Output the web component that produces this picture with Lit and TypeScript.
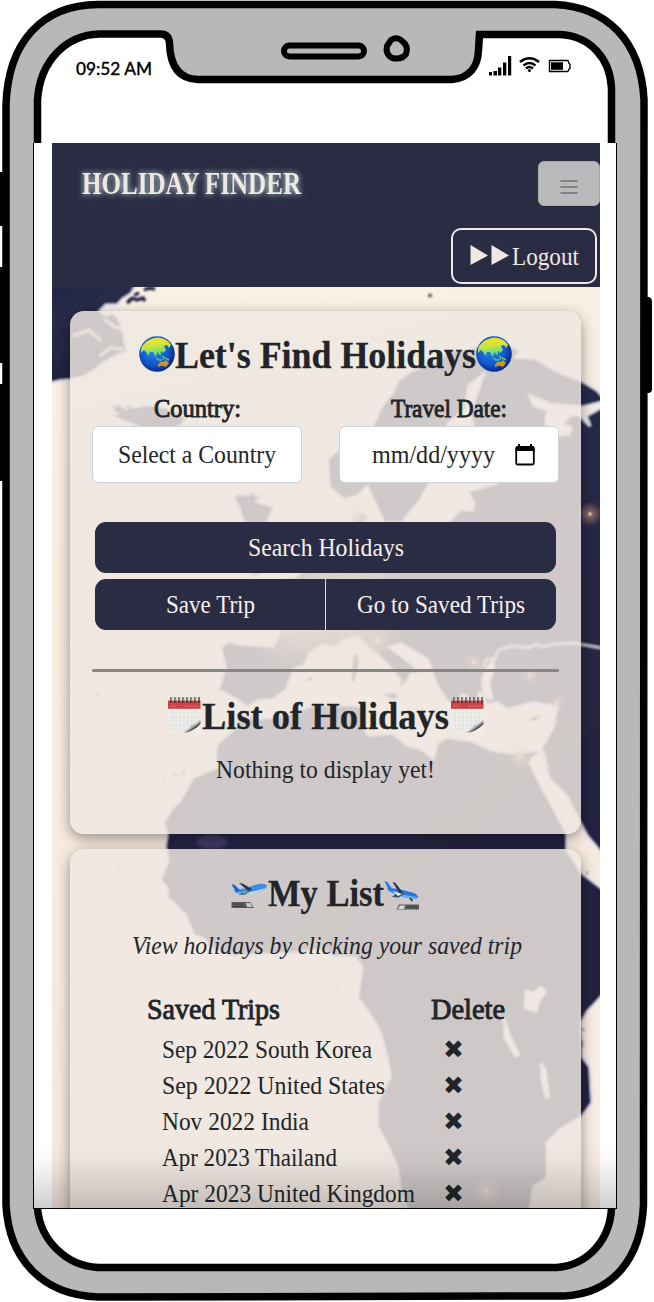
import { LitElement, html, svg, css } from "lit";
import { customElement, property } from "lit/decorators.js";

/** One line of text set to an exact measure; the baseline sits at 76% of the line box. */
@customElement("fit-line")
class FitLine extends LitElement {
  @property() text = "";
  @property({ type: Number }) width = 100;
  @property({ type: Number }) height = 32;
  static styles = css`
    :host { display: block; flex: none; line-height: 0; }
    svg { display: block; overflow: visible; }
    text { fill: currentColor; stroke: currentColor; stroke-width: var(--heft, 0); }
  `;
  render() {
    return html`<svg width=${this.width} height=${this.height} role="img" aria-label=${this.text}>
      <text x="0" y=${this.height * 0.76} textLength=${this.width} lengthAdjust="spacingAndGlyphs">${this.text}</text>
    </svg>`;
  }
}

const line = (text: string, width: number, height = 32) =>
  html`<fit-line .text=${text} .width=${width} .height=${height}></fit-line>`;

const globe = html`<svg class="globe" width="36" height="36" viewBox="0 0 36 36">
  <defs>
    <radialGradient id="sea" cx=".42" cy=".4" r=".62"><stop offset="0" stop-color="#2586ee"/><stop offset=".65" stop-color="#1156cc"/><stop offset="1" stop-color="#08277e"/></radialGradient>
    <linearGradient id="land" x1="0" y1="0" x2=".2" y2="1"><stop offset="0" stop-color="#e3df2c"/><stop offset=".5" stop-color="#c8e341"/><stop offset="1" stop-color="#51d982"/></linearGradient>
  </defs>
  <circle cx="18" cy="18" r="17.8" fill="url(#sea)"/>
  <path d="M3 10Q9 2 19 1.500Q28 2 32 9L30 12L28 9L25 10L27 14L24 17L22 15L21.500 20L18.500 16L16.500 21L14 16L11 16L9.500 20L7 16L5 14L2 17Q1.500 13 3 10Z" fill="url(#land)"/>
  <path d="M7 6Q14 1 24 3L30 7Q23 9 19 6L14 9Z" fill="#eee42c" opacity=".8"/>
  <path d="M17 22L20 24L23 24M23 20L25 22L24 24M26 22L30 24" fill="none" stroke="#5ec66d" stroke-width="1.400"/>
  <path d="M19 29L21 26L25 25.500L27 24L30 27L27 31L23 29.500L19 31Z" fill="#c9962b"/>
</svg>`;

const calendar = html`<svg class="calendar" width="33" height="37" viewBox="0 0 33 37">
  <defs><linearGradient id="curl" x1=".2" y1=".2" x2="1" y2="1"><stop offset="0" stop-color="#fff"/><stop offset=".45" stop-color="#bbb"/><stop offset=".6" stop-color="#444"/><stop offset="1" stop-color="#ddd"/></linearGradient></defs>
  <path d="M0 4H32.500V36.500H1Z" fill="#efeeec"/>
  <path d="M4 13V36M8 13V36M12 13V36M16 13V36M20 13V34M24 13V30M28 13V27M1 17H32M1 21H32M1 25H31M1 29H27M1 33H22" stroke="#dddcda" stroke-width=".7"/>
  <rect y="4.500" width="32.500" height="8.300" fill="#cb4348"/>
  <path d="M2 10H8M17 10H30" stroke="#d96c6e" stroke-width="1.200"/>
  <path d="M3 1V7M7 1V7M11 1V7M15 1V7M19 1V7M23 1V7M27 1V7M31 1V7" stroke="#3b3030" stroke-width="1.300"/>
  <path d="M4 1V5M8 1V5M12 1V5M16 1V5M20 1V5M24 1V5M28 1V5" stroke="#b9b1ae" stroke-width=".9"/>
  <path d="M14 36.500Q21 34 23 29Q29 28 32.500 23V28Q27 34 19 36.500Z" fill="url(#curl)"/>
</svg>`;

const takeOff = html`<svg class="takeoff" width="37" height="30" viewBox="0 0 37 30">
  <path d="M3 8.500Q14 7 24 3Q33 .5 36 3.500Q35 7 29 9Q19 12.500 10 12.500Q5 12 3 8.500Z" fill="#3d8ae8"/>
  <path d="M5 10.500Q17 12 34 6Q29 10 20 11.700Q10 13.500 5 10.500Z" fill="#c7dcee"/>
  <path d="M.5 2.500L3 2.500L9 8L5 10Z" fill="#1e65c9"/>
  <path d="M8 1L11.500 1.500L21 7L18 9.500Z" fill="#26384d"/>
  <path d="M16 8.500L22 8L13 13L7 12.500Z" fill="#356f6b"/>
  <path d="M12 9L18 9.500L12 12Z" fill="#55b8b4"/>
  <path d="M.5 20H19L23 26H.5Z" fill="#5c5d5b"/><path d="M15 21H19L21.500 25H16Z" fill="#c8c9c5"/>
  <path d="M2 22H13M2 24.500H14" stroke="#3d3e3d" stroke-width="1"/>
</svg>`;

const landing = html`<svg class="landing" width="36" height="32" viewBox="0 0 36 32">
  <path d="M3 8Q13 8 26 12Q33 13 34 17Q33 20 27 18.500Q13 16 5 11Z" fill="#2877dc"/>
  <path d="M5 10Q16 15 33 17Q31 20 26 18.500Q13 16 5 10Z" fill="#65aef0"/>
  <path d="M.5 1L3.500 2L9 10L5 11Z" fill="#2c7be8"/>
  <path d="M8.500 2L11.500 3L19 13L16 14Z" fill="#28384a"/>
  <path d="M13 13L20 14L15 17.500L8 17Z" fill="#31536b"/>
  <path d="M9 11L18 14L14 16Z" fill="#e7f0f5"/>
  <path d="M26 18L28.500 21" stroke="#333" stroke-width="1.500"/>
  <path d="M15 24.500H35V29.500H12.500Z" fill="#5a5b58"/><path d="M16 25.500H21L20 29H14Z" fill="#dadbd7"/>
  <path d="M23 27H34" stroke="#3f403e"/>
</svg>`;

const land = svg`
  <path d="M46 280H139L131 294L123 299L117 305L106 305L100 311L107 315L112 312L118 317L122 325L127 352L116 356L104 363L94 371L84 377L70 380L60 381L46 384Z"/>
  <path d="M107 410L113 411L112 405L120 404L126 408L125 402L133 407L148 404L165 407L187 417L182 426L165 432L145 430L130 424L108 415L116 413Z"/>
  <path d="M233 497L239 493L247 495L251 491L258 496L267 490L266 494L257 501L275 507L268 522L279 548L281 565L263 574L247 578L255 567L248 552L252 530L242 520L239 509Z"/>
  <path d="M607 401L583 407L553 405L530 396L534 405L548 410L546 424L555 428L560 435L569 434L571 428L562 424L570 415L578 414L590 426L586 416L607 404V860L587 836L580 823L567 797L550 780L545 768L541 752L532 759L530 763L540 783L553 807L567 833V850L582 873L607 892V993L588 1011L582 1022L583 1057L590 1067L592 1103L582 1117L560 1130L547 1143L553 1160V1172L550 1177L534 1187L530 1214H409L400 1190L397 1167L387 1145L377 1127V1103L390 1077L387 1058L380 1033L373 1020L357 997L362 968L355 958L333 957L322 950L290 954L257 955L233 957L213 950L203 939L193 935L185 915L173 903L167 899V888L160 880L168 860L165 846L167 835L163 823L172 808L180 800L193 777L210 770L217 767L215 753L217 743L235 728L240 713L255 718L275 717L315 704L357 705L365 708L362 722L368 735L393 733L407 745L422 749L433 758L437 743L447 737L470 740L493 750L513 753L540 750L553 727L557 707L533 703L507 710L498 703L487 705L480 693L476 703L463 695L455 708L447 701L436 685L428 660L401 644L390 647L407 660L423 674L412 674L407 682L398 690L400 680L388 665L371 650L357 637L342 641L335 648L323 645L310 654L304 666L294 669L287 690L273 700L258 701L247 708L237 700L218 690L225 667L220 647L229 641L240 644L273 646L280 630L260 595L258 583L294 577L315 560L337 555L350 520L362 525L447 523L461 509L473 510V502L467 491L497 483L443 482L451 460L476 435L469 415L483 375L469 386L465 410L449 423L435 455L429 485L421 500L412 510L403 523L384 523L376 506L367 487L357 497L344 500L329 488L327 460L347 440L372 426L382 405L393 391L398 380L410 371L436 361L449 350L470 348L489 342L510 345L521 351L516 357L535 358L557 371L582 381L597 390Z"/>
  <path d="M352 655L358 650L360 664L355 683H350ZM382 693L398 692L397 702L383 696ZM452 713L469 718L463 721L452 717ZM528 717L545 713L536 722L529 721ZM306 679a4 3 0 1 0 8 0a4 3 0 1 0-8 0M350 514l11-5 9 8-7 8-10-2Z"/>`;

const seas = svg`
  <path d="M525 1008L526 991L534 993L541 987L546 992L540 999L536 1011Z"/>
  <path d="M504 1018L509 1034L519 1055L516 1056L505 1038ZM541 1063L545 1070L549 1097L546 1097L542 1080Z"/>
  <path d="M607 990L588 1011L582 1022L584 1057L591 1067L593 1103L582 1117L560 1130L547 1143V1215H607Z"/>
  <path d="M419 524Q424 501 435 497L428 518ZM482 680l6-14 6-6-1 11-4 12 3 16-8-3Z"/>`;

const worldMap = html`<svg class="map" width="548" height="921" viewBox="52 287 548 921">
  <defs>
    <linearGradient id="paper" x1="0" y1="0" x2=".15" y2="1"><stop offset="0" stop-color="#faf1e5"/><stop offset=".4" stop-color="#f8ebde"/><stop offset="1" stop-color="#f7e8e1"/></linearGradient>
    <linearGradient id="night" x1="0" y1="0" x2=".4" y2="1"><stop offset="0" stop-color="#1b2545"/><stop offset=".35" stop-color="#292b49"/><stop offset="1" stop-color="#22203f"/></linearGradient>
    <radialGradient id="glow"><stop offset="0" stop-color="#ffe5cf"/><stop offset=".22" stop-color="#dca184" stop-opacity=".5"/><stop offset="1" stop-color="#c98570" stop-opacity="0"/></radialGradient>
    <radialGradient id="haze"><stop offset="0" stop-color="#f5d9b6" stop-opacity=".8"/><stop offset="1" stop-color="#e8c4a4" stop-opacity="0"/></radialGradient>
    <filter id="soft" x="-5%" y="-5%" width="110%" height="110%"><feGaussianBlur stdDeviation=".8"/></filter>
  </defs>
  <rect x="52" y="287" width="548" height="921" fill="url(#paper)"/>
  <g filter="url(#soft)">
    <g fill="url(#night)" stroke="#eae6f5" stroke-width="2.400">${land}</g>
    <g fill="#f9ece2" stroke="#eae6f5" stroke-width="1.500">${seas}</g>
    <path d="M483 667L486 660L495 658L499 650L512 646L528 648L537 644L541 647L555 644L573 643L585 645L602 648M543 750L547 768L545 776" fill="none" stroke="#d8d5e8" stroke-width="2"/>
    <path d="M127 303l5-5 5 2 6-2 2 3M134 295l5-2M144 290l5-2 6 1M128 299l3 3" fill="none" stroke="#22223f" stroke-width="3.500"/>
    <path d="M104 319l11 8 12 4M100 356l10-8 13 1M73 336l16-6 12 11" fill="none" stroke="#f0e8ee" stroke-width="2"/>
    <circle cx="430" cy="295.500" r="2" fill="#5d5149"/>
    <path d="M76 689h2M84 687h2M96 694h3M162 738h2M163 778h2M173 775h4M182 775l4-6M100 863h2M117 869h2M111 878h2M586 873h2M583 1028v3M582 1040v8M353 965h2M337 989h2" stroke="#8d8797" stroke-width="2.500"/>
  </g>
  <g fill="url(#haze)"><circle cx="345" cy="610" r="68"/><circle cx="290" cy="620" r="50"/><circle cx="355" cy="515" r="24"/></g>
  <g fill="url(#glow)">
    <circle cx="590" cy="514" r="13"/><circle cx="520" cy="757" r="15"/><circle cx="557" cy="703" r="9"/><circle cx="530" cy="675" r="10"/><circle cx="474" cy="662" r="10"/><circle cx="486" cy="1191" r="15"/><circle cx="378" cy="640" r="15"/>
  </g>
  <ellipse cx="212" cy="842" rx="15" ry="7" fill="#7d5ca0" opacity=".35" filter="url(#soft)"/>
</svg>`;

const frame = html`<svg class="frame" width="654" height="1302" viewBox="0 0 654 1302">
  <path d="M0 172H4V226H0ZM0 267H4V363H0ZM0 384H4V481H0ZM645 297H649Q652 298 652 302V389Q652 393 648 393H645Z"/>
  <path d="M6 105C8 42 42 5 98 4.500H555C606 7 641 40 644 100L643.500 1205C641 1260 612 1293 565 1296L98 1297C43 1295 9 1260 6 1205Z" fill="#b8b8b8" stroke="#000" stroke-width="7.500"/>
  <path d="M37.500 145V100C40 60 67 35 99 34H160Q169 34 169.500 43C170 65 178 79 198 79.500H452C469 78 478 67 478.500 50L479.500 34.500H560C590 36 610 58 611.500 88V145V1208C610 1240 588 1265 557 1267.500H98C66 1266 40 1240 37.500 1208Z" fill="#fff" stroke="#000" stroke-width="7.500"/>
  <rect x="284" y="45.500" width="80" height="11" rx="5.500" fill="#b8b8b8" stroke="#000" stroke-width="6"/>
  <path d="M391 40Q397 36 402 41Q409 46 406 54Q402 60 392 58Q385 54 387 46Z" fill="#b8b8b8" stroke="#000" stroke-width="6"/>
</svg>`;

const statusIcons = html`<svg width="84" height="24" viewBox="489 54 84 24">
  <path d="M488.500 72h3.500v3.500h-3.500ZM493.500 71h3.500v4.500h-3.500ZM498 67.500h3.300v8H498ZM503 62.500h3.300v13H503ZM508 56h3.200v19.500H508Z"/>
  <path d="M520 62Q529.500 54.500 539 62M523.500 65.500Q529.500 60.500 535.500 65.500M526 68.500Q529.500 65.500 533 68.500" fill="none" stroke="#000" stroke-width="2.600"/>
  <circle cx="529.500" cy="70.500" r="1.500"/>
  <path d="M549.500 60.500H567.500Q568.500 60.500 568.800 63L570 64.500V68L568.800 69.500Q568.500 71.500 567.500 71.500H549.500Z" fill="#fff" stroke="#000" stroke-width="1.400"/>
  <rect x="551" y="62.300" width="12" height="7.500"/>
</svg>`;

@customElement("app-root")
class AppRoot extends LitElement {
  trips = [
    { name: "Sep 2022 South Korea", width: 210 },
    { name: "Sep 2022 United States", width: 223 },
    { name: "Nov 2022 India", width: 147 },
    { name: "Apr 2023 Thailand", width: 175 },
    { name: "Apr 2023 United Kingdom", width: 253 },
  ];

  static styles = css`
    :host { display: block; position: relative; width: 654px; height: 1302px; overflow: hidden; background: #fff;
      font: 25px "Liberation Serif", serif; color: #212529; }
    * { box-sizing: border-box; }
    svg { display: block; flex: none; }
    .frame { position: absolute; inset: 0; }
    .phone { position: relative; display: flex; flex-direction: column; width: 584px; margin-left: 33px; }
    .status { height: 143px; display: flex; justify-content: space-between; align-items: flex-start;
      padding: 54px 44px 0 43px; color: #000; font: 500 18px Lato, sans-serif; --heft: .3px; }
    .screen { position: relative; height: 1066px; overflow: hidden; padding: 0 16px 0 18px; background: #fff;
      border: solid #000; border-width: 0 1px 1.5px; }
    .app { position: relative; height: 1065px; }
    .fade { position: absolute; inset: auto 0 0; height: 64px; background: linear-gradient(#0000, #00000008 30%, #00000030); }
    header { height: 144px; background: #2a2c43; color: #f0e8e2; display: flex; flex-direction: column;
      align-items: flex-end; position: relative; }
    .bar { display: flex; width: 100%; height: 85px; justify-content: space-between; align-items: flex-start; padding: 18px 0 0 30px; }
    .brand { margin-top: 7px; font-weight: bold; font-size: 31px; filter: drop-shadow(0 0 3px #c4dcdd); }
    .toggle { width: 62px; height: 45px; border: 1px solid #a9a9a9; border-radius: 6px; background: #bababa;
      display: grid; place-items: center; padding: 6px 0 0; }
    .logout { width: 146px; height: 56px; margin-right: 3px; border: 2px solid #f0e8e2; border-radius: 10px;
      background: none; color: inherit; display: flex; align-items: center; padding: 2px 0 0 17px; font: inherit; gap: 2px; }
    .body { position: relative; height: 921px; padding: 24px 19px 0 18px; display: flex; flex-direction: column; gap: 15px; overflow: hidden; }
    .map { position: absolute; inset: 0; }
    .card { position: relative; flex: none; border-radius: 14px; background: rgba(238, 231, 225, .845);
      box-shadow: 0 4px 14px #00000066; }
    .search { height: 523px; padding: 24px 22px 0 22px; }
    .saved { height: 420px; padding: 24px 0 0; }
    h2 { display: flex; justify-content: center; align-items: flex-start; margin: 0; font-size: 38px; height: 44px; }
    .globe { margin-top: 1px; }
    .calendar { margin: 0 1.5px; }
    .takeoff { margin-top: 9px; }
    .landing { margin-top: 7px; }
    h2 fit-line { --heft: .3px; }
    .fields { display: grid; grid-template-columns: 210px 220px; justify-content: space-between; margin-top: 16px; }
    label { display: flex; flex-direction: column; align-items: center; --heft: .9px; }
    .caption { margin: -2px 0 2px; }
    .input { --heft: 0; width: 100%; height: 57px; margin-top: -1px; border: 1.5px solid #cdd4d9; border-radius: 6px; background: #fff;
      display: flex; align-items: center; justify-content: center; }
    .date { justify-content: flex-start; padding-left: 32px; gap: 20px; }
    .buttons { display: grid; grid-template-columns: 1fr 1fr; gap: 6px 1px; margin: 39px 3px 0 3px; }
    .buttons button { height: 51px; border: 0; padding: 0; background: #2a2c43; color: #f6f1f1; font: inherit; display: grid; place-items: center; }
    .wide { grid-column: span 2; border-radius: 11px; }
    .buttons .wide { border-radius: 11px; }
    .left { border-radius: 11px 0 0 11px; }
    .right { border-radius: 0 11px 11px 0; }
    hr { margin: 39px 0 24px; border: 0; height: 3px; background: #888682; border-radius: 2px; }
    .empty { display: grid; justify-content: center; margin-top: 14px; }
    .hint { display: flex; padding-left: 62px; margin: 13px 0 0; font-style: italic; }
    .table { display: grid; grid-template-columns: 284px 80px; margin: 30px 0 0 77px; }
    .th { font-size: 29px; --heft: .9px; height: 40px; }
    .td { height: 36px; padding-left: 14.5px; display: flex; align-items: center; }
    .x { font: 25px/36px "DejaVu Sans", sans-serif; padding: 0; border: 0; background: none; color: inherit; }
    .end { padding-left: 12px; }
  `;

  render() {
    return html`
      ${frame}
      <div class="phone">
        <div class="status">${line("09:52 AM", 76, 28)}${statusIcons}</div>
        <div class="screen">
          <div class="app">
            <header>
              <div class="bar">
                <div class="brand">${line("HOLIDAY FINDER", 219, 34)}</div>
                <button class="toggle" aria-label="Menu">
                  <svg width="18" height="14" viewBox="0 0 18 14"><path d="M.5 1H17.500M.5 7H17.500M.5 13H17.500" stroke="#4d4d4d" stroke-width="1.200"/></svg>
                </button>
              </div>
              <button class="logout">
                <svg width="40" height="24" viewBox="0 0 40 24"><path d="M.5 0L18 10.500L.5 20ZM21.500 0L39 10.500L21.500 20Z" fill="#f0e8e2"/></svg>
                ${line("Logout", 67)}
              </button>
            </header>
            <div class="body">
              ${worldMap}
              <section class="card search">
                <h2>${globe}${line("Let's Find Holidays", 301, 44)}${globe}</h2>
                <div class="fields">
                  <label><span class="caption">${line("Country:", 87, 32)}</span><span class="input">${line("Select a Country", 158)}</span></label>
                  <label><span class="caption">${line("Travel Date:", 116, 32)}</span>
                    <span class="input date">${line("mm/dd/yyyy", 123)}
                      <svg width="20" height="22" viewBox="0 0 20 22"><path d="M1 3Q1 2 2 2H3V0H5V2H15V0H17V2H18Q19.500 2 19.500 3.500V7H.5V3Z"/><rect x="1.200" y="4" width="17.600" height="16.500" rx="1.500" fill="none" stroke="#000" stroke-width="1.800"/></svg>
                    </span></label>
                </div>
                <div class="buttons">
                  <button class="wide">${line("Search Holidays", 156)}</button>
                  <button class="left">${line("Save Trip", 89)}</button>
                  <button class="right">${line("Go to Saved Trips", 168)}</button>
                </div>
                <hr />
                <h2>${calendar}${line("List of Holidays", 247, 44)}${calendar}</h2>
                <div class="empty">${line("Nothing to display yet!", 219)}</div>
              </section>
              <section class="card saved">
                <h2>${takeOff}${line("My List", 116, 44)}${landing}</h2>
                <p class="hint">${line("View holidays by clicking your saved trip", 390)}</p>
                <div class="table">
                  <div class="th">${line("Saved Trips", 133, 36)}</div>
                  <div class="th">${line("Delete", 74, 36)}</div>
                  ${this.trips.map((t) => html`
                    <div class="td">${line(t.name, t.width)}</div>
                    <div class="td end"><button class="x" aria-label="Delete trip">✖</button></div>`)}
                </div>
              </section>
            </div>
          </div>
          <div class="fade"></div>
        </div>
      </div>`;
  }
}
